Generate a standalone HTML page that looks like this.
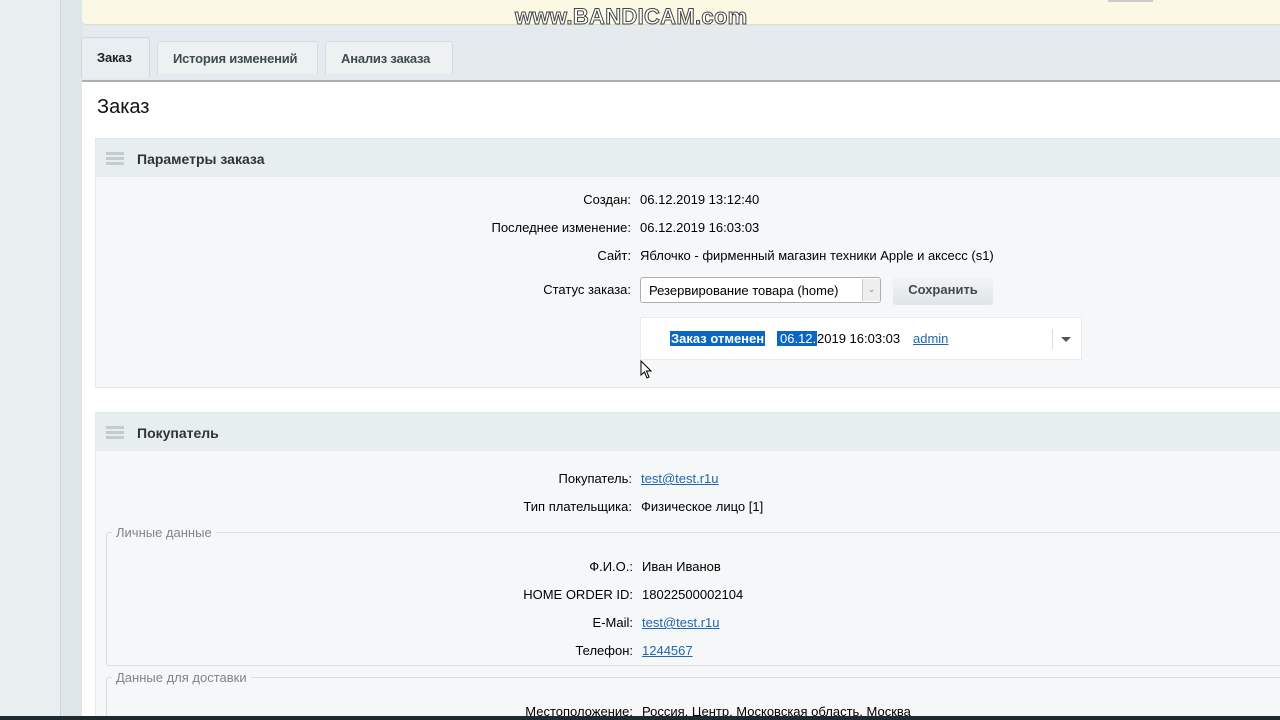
<!DOCTYPE html>
<html style="width:1280px;height:720px;overflow:hidden"><head><meta charset="utf-8"><style>
*{box-sizing:border-box;margin:0;padding:0}
body{width:1280px;height:720px;overflow:hidden;background:#e4eaed;font-family:"Liberation Sans",sans-serif;font-size:13px;color:#000;position:relative}
.abs{position:absolute}
.gut{left:0;top:0;width:61px;height:720px;background:#e9eef1;border-right:1px solid #c9d2d6}
.gut2{left:62px;top:0;width:20px;height:720px;background:#dfe6e9}
.yel{left:82px;top:0;width:1198px;height:24px;background:#fbf9e3;border-radius:0 0 0 4px;box-shadow:0 1px 1px #dcdcc8}
.wm{left:515px;top:4px;font-size:22px;font-weight:bold;color:#fff;-webkit-text-stroke:1px #444;letter-spacing:0.3px}
.tab{top:41px;height:33px;background:#edf1f2;border:1px solid #d5dcdf;border-bottom:none;border-radius:3px 3px 0 0;font-weight:bold;color:#3f4b4f;padding:9px 15px 0;font-size:13px;letter-spacing:-0.2px}
.panel{left:82px;top:80px;width:1198px;height:640px;background:#fff;border-top:2px solid #a9b1b4}
.sec{left:95px;width:1185px;background:#f5f7f8;border:1px solid #e2e8ea;border-right:none}
.sh{left:0;top:0;width:100%;height:38px;background:#e6eef0}
.ham{left:10px;width:18px;height:3px;background:#c3cdd0}
.lbl{text-align:right;width:300px;color:#000}
a{color:#2067b0;text-decoration:underline}
.fs{left:106px;width:1174px;border:1px solid #d9dfe1;border-right:none;border-radius:3px 0 0 3px}
.leg{background:#f5f7f8;color:#7c878b;padding:0 4px}
</style></head><body>
<div class="abs gut"></div><div class="abs gut2"></div>
<div class="abs yel"></div>
<div class="abs" style="left:1108px;top:0;width:45px;height:2px;background:#ccc"></div>
<div class="abs wm">www.BANDICAM.com</div>
<div class="abs panel"></div>
<div class="abs tab" style="left:81px;width:69px;height:40px;top:37px;background:#e9eef0;color:#222;padding-top:12px;border-color:#d0d7da">Заказ</div>
<div class="abs tab" style="left:157px;width:161px">История изменений</div>
<div class="abs tab" style="left:325px;width:128px">Анализ заказа</div>
<div class="abs" style="left:97px;top:96px;font-size:20px;color:#111">Заказ</div>

<div class="abs sec" style="top:138px;height:250px">
 <div class="abs sh"></div>
 <div class="abs ham" style="top:13px"></div><div class="abs ham" style="top:18px"></div><div class="abs ham" style="top:23px"></div>
 <div class="abs" style="left:41px;top:12px;font-weight:bold;font-size:14px;color:#333">Параметры заказа</div>
</div>
<div class="abs lbl" style="left:331px;top:192px">Создан:</div><div class="abs" style="left:640px;top:192px">06.12.2019 13:12:40</div>
<div class="abs lbl" style="left:331px;top:220px">Последнее изменение:</div><div class="abs" style="left:640px;top:220px">06.12.2019 16:03:03</div>
<div class="abs lbl" style="left:331px;top:248px">Сайт:</div><div class="abs" style="left:640px;top:248px">Яблочко - фирменный магазин техники Apple и аксесс (s1)</div>
<div class="abs lbl" style="left:331px;top:282px">Статус заказа:</div>
<div class="abs" style="left:640px;top:277px;width:241px;height:26px;background:#fff;border:1px solid #a8b0b3;border-radius:3px;padding:5px 8px">Резервирование товара (home)</div>
<div class="abs" style="left:862px;top:279px;width:18px;height:22px;border-left:1px solid #ccc;background:#eee;color:#888;font-size:9px;text-align:center;padding-top:5px">&#8964;</div>
<div class="abs" style="left:893px;top:277px;width:100px;height:28px;background:linear-gradient(#f2f5f6,#dfe5e7);border-radius:3px;font-weight:bold;color:#3f4b4f;padding-top:5px;text-align:center">Сохранить</div>
<div class="abs" style="left:640px;top:317px;width:442px;height:43px;background:#fff;border:1px solid #e8ecee"></div>
<div class="abs" style="left:670px;top:331px;background:#0a67c4;color:#fff;font-weight:bold;padding:0 1px">Заказ отменен</div>
<div class="abs" style="left:777px;top:331px;background:#0a67c4;color:#fff;padding:0 1px 0 3px">06.12.</div>
<div class="abs" style="left:817px;top:331px">2019 16:03:03</div>
<div class="abs" style="left:913px;top:331px"><a>admin</a></div>
<div class="abs" style="left:1052px;top:329px;width:1px;height:20px;background:#ddd"></div>
<div class="abs" style="left:1061px;top:337px;width:0;height:0;border-left:5px solid transparent;border-right:5px solid transparent;border-top:5px solid #555"></div>

<div class="abs sec" style="top:412px;height:308px">
 <div class="abs sh"></div>
 <div class="abs ham" style="top:13px"></div><div class="abs ham" style="top:18px"></div><div class="abs ham" style="top:23px"></div>
 <div class="abs" style="left:41px;top:12px;font-weight:bold;font-size:14px;color:#333">Покупатель</div>
</div>
<div class="abs lbl" style="left:332px;top:471px">Покупатель:</div><div class="abs" style="left:641px;top:471px"><a>test@test.r1u</a></div>
<div class="abs lbl" style="left:332px;top:499px">Тип плательщика:</div><div class="abs" style="left:641px;top:499px">Физическое лицо [1]</div>
<div class="abs fs" style="top:532px;height:134px"></div>
<div class="abs leg" style="left:112px;top:525px">Личные данные</div>
<div class="abs lbl" style="left:333px;top:559px">Ф.И.О.:</div><div class="abs" style="left:642px;top:559px">Иван Иванов</div>
<div class="abs lbl" style="left:333px;top:587px">HOME ORDER ID:</div><div class="abs" style="left:642px;top:587px">18022500002104</div>
<div class="abs lbl" style="left:333px;top:615px">E-Mail:</div><div class="abs" style="left:642px;top:615px"><a>test@test.r1u</a></div>
<div class="abs lbl" style="left:333px;top:643px">Телефон:</div><div class="abs" style="left:642px;top:643px"><a>1244567</a></div>
<div class="abs fs" style="top:677px;height:43px;border-bottom:none"></div>
<div class="abs leg" style="left:112px;top:670px">Данные для доставки</div>
<div class="abs lbl" style="left:333px;top:704px">Местоположение:</div><div class="abs" style="left:642px;top:704px">Россия, Центр, Московская область, Москва</div>
<div class="abs" style="left:0;top:716px;width:1280px;height:4px;background:#1e2a30"></div>
<svg class="abs" style="left:640px;top:360px" width="14" height="20"><path d="M1 1 L1 15 L4.5 12 L7 18 L9 17 L6.5 11 L11 11 Z" fill="#fff" stroke="#000" stroke-width="1"/></svg>
</body></html>
